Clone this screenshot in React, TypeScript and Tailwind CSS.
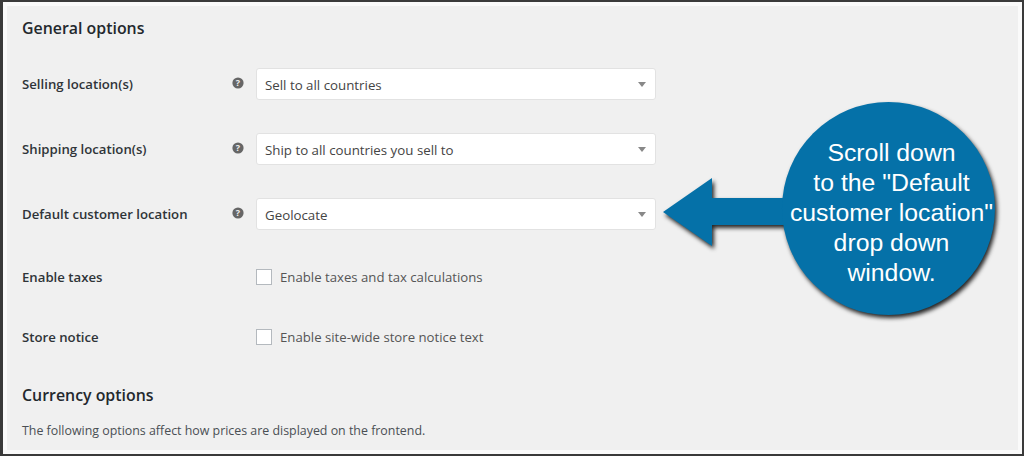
const selects = [
  { label: 'Selling location(s)', value: 'Sell to all countries' },
  { label: 'Shipping location(s)', value: 'Ship to all countries you sell to' },
  { label: 'Default customer location', value: 'Geolocate' },
];

const checks = [
  { label: 'Enable taxes', text: 'Enable taxes and tax calculations' },
  { label: 'Store notice', text: 'Enable site-wide store notice text' },
];

function HelpIcon() {
  return (
    <svg width="12" height="12" viewBox="0 0 12 12" className="shrink-0">
      <circle cx="6" cy="6" r="5.6" fill="#666" />
      <text x="6" y="9.2" textAnchor="middle" fontSize="9" fontWeight="700" fill="#f0f0f0" fontFamily="Open Sans">?</text>
    </svg>
  );
}

function Callout() {
  return (
    <div className="absolute left-[655px] top-[95px] w-[350px] h-[230px]">
      <svg width="350" height="230" viewBox="0 0 350 230" className="absolute inset-0 drop-shadow-[2px_3px_2px_rgba(0,0,0,0.85)]">
        <path d="M8 117 L57 83 L57 103 L140 103 L140 130 L57 130 L57 151 Z" fill="#0571a8" />
        <circle cx="233.5" cy="113.5" r="106.5" fill="#0571a8" />
      </svg>
      <div className="absolute left-[130px] top-[43px] w-[213px] text-center text-white text-[24.8px] leading-[30px] font-['Liberation_Sans',Arial,sans-serif]">
        <div>Scroll down</div>
        <div>to the "Default</div>
        <div className="whitespace-nowrap">customer location"</div>
        <div>drop down</div>
        <div>window.</div>
      </div>
    </div>
  );
}

export default function App() {
  return (
    <div className="relative w-[1024px] h-[456px] overflow-hidden bg-[#3a3a3a] pl-[3px] pr-[2px] pt-[2px] pb-[2px] font-['Open_Sans','Noto_Sans',sans-serif]">
      <div className="h-full border-[4px] border-[#fafafa] bg-[#f0f0f0] pl-[15px] pt-[15px] text-[13.2px] text-[#3c434a]">
        <h2 className="h-[16px] flex items-center text-[15.9px] font-semibold text-[#23282d]">General options</h2>

        <div className="mt-[31px] flex flex-col gap-[33px]">
          {selects.map((row) => (
            <div key={row.label} className="flex items-center h-[32px]">
              <div className="w-[210px] font-semibold text-[#2f3438] translate-y-px">{row.label}</div>
              <div className="-translate-y-px">
                <HelpIcon />
              </div>
              <div className="ml-[12px] w-[400px] h-[32px] flex items-center justify-between rounded-[3px] border border-[#e2e2e2] bg-white pl-[8px] pr-[8px] text-[13.3px] text-[#444]">
                <span className="translate-y-[2px]">{row.value}</span>
                <svg width="8" height="5" viewBox="0 0 8 5" className="mr-[1px]">
                  <path d="M0 0 H8 L4 5 Z" fill="#888" />
                </svg>
              </div>
            </div>
          ))}
        </div>

        <div className="mt-[39px] flex flex-col gap-[44px]">
          {checks.map((row) => (
            <div key={row.label} className="flex items-center h-[16px]">
              <div className="w-[234px] font-semibold text-[#2f3438] translate-y-px">{row.label}</div>
              <div className="w-[16px] h-[16px] border border-[#b4b9be] bg-white" />
              <div className="ml-[8px] text-[#555] translate-y-px">{row.text}</div>
            </div>
          ))}
        </div>

        <h2 className="mt-[42px] h-[16px] flex items-center text-[15.9px] font-semibold text-[#23282d] translate-y-px">Currency options</h2>
        <p className="mt-[19px] h-[16px] flex items-center text-[12.4px] text-[#4a4f54] translate-y-px">The following options affect how prices are displayed on the frontend.</p>
      </div>
      <Callout />
    </div>
  );
}
